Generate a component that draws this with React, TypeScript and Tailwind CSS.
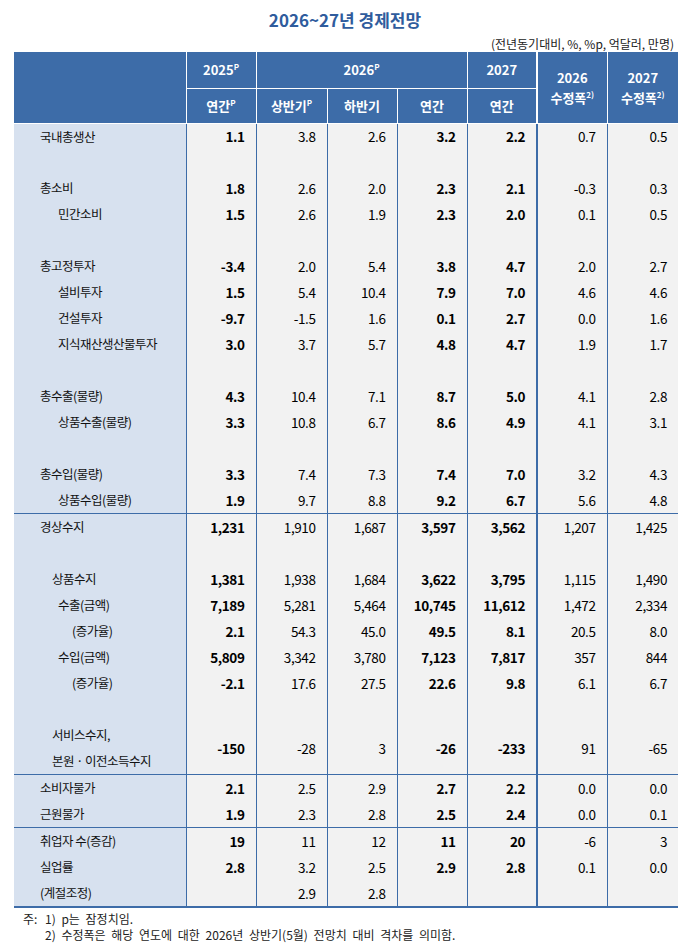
import React from 'react'

type Row = {
  label?: string[]
  indent?: number
  v?: string[]
  sep?: boolean
}

const rows: Row[] = [
  { label: ['국내총생산'], indent: 0, v: ['1.1', '3.8', '2.6', '3.2', '2.2', '0.7', '0.5'] },
  {},
  { label: ['총소비'], indent: 0, v: ['1.8', '2.6', '2.0', '2.3', '2.1', '-0.3', '0.3'] },
  { label: ['민간소비'], indent: 18, v: ['1.5', '2.6', '1.9', '2.3', '2.0', '0.1', '0.5'] },
  {},
  { label: ['총고정투자'], indent: 0, v: ['-3.4', '2.0', '5.4', '3.8', '4.7', '2.0', '2.7'] },
  { label: ['설비투자'], indent: 18, v: ['1.5', '5.4', '10.4', '7.9', '7.0', '4.6', '4.6'] },
  { label: ['건설투자'], indent: 18, v: ['-9.7', '-1.5', '1.6', '0.1', '2.7', '0.0', '1.6'] },
  { label: ['지식재산생산물투자'], indent: 18, v: ['3.0', '3.7', '5.7', '4.8', '4.7', '1.9', '1.7'] },
  {},
  { label: ['총수출(물량)'], indent: 0, v: ['4.3', '10.4', '7.1', '8.7', '5.0', '4.1', '2.8'] },
  { label: ['상품수출(물량)'], indent: 18, v: ['3.3', '10.8', '6.7', '8.6', '4.9', '4.1', '3.1'] },
  {},
  { label: ['총수입(물량)'], indent: 0, v: ['3.3', '7.4', '7.3', '7.4', '7.0', '3.2', '4.3'] },
  { label: ['상품수입(물량)'], indent: 18, v: ['1.9', '9.7', '8.8', '9.2', '6.7', '5.6', '4.8'] },
  { label: ['경상수지'], indent: 0, sep: true, v: ['1,231', '1,910', '1,687', '3,597', '3,562', '1,207', '1,425'] },
  {},
  { label: ['상품수지'], indent: 12, v: ['1,381', '1,938', '1,684', '3,622', '3,795', '1,115', '1,490'] },
  { label: ['수출(금액)'], indent: 18, v: ['7,189', '5,281', '5,464', '10,745', '11,612', '1,472', '2,334'] },
  { label: ['(증가율)'], indent: 32, v: ['2.1', '54.3', '45.0', '49.5', '8.1', '20.5', '8.0'] },
  { label: ['수입(금액)'], indent: 18, v: ['5,809', '3,342', '3,780', '7,123', '7,817', '357', '844'] },
  { label: ['(증가율)'], indent: 32, v: ['-2.1', '17.6', '27.5', '22.6', '9.8', '6.1', '6.7'] },
  {},
  { label: ['서비스수지,', '본원 · 이전소득수지'], indent: 12, v: ['-150', '-28', '3', '-26', '-233', '91', '-65'] },
  { label: ['소비자물가'], indent: 0, sep: true, v: ['2.1', '2.5', '2.9', '2.7', '2.2', '0.0', '0.0'] },
  { label: ['근원물가'], indent: 0, v: ['1.9', '2.3', '2.8', '2.5', '2.4', '0.0', '0.1'] },
  { label: ['취업자 수(증감)'], indent: 0, sep: true, v: ['19', '11', '12', '11', '20', '-6', '3'] },
  { label: ['실업률'], indent: 0, v: ['2.8', '3.2', '2.5', '2.9', '2.8', '0.1', '0.0'] },
  { label: ['(계절조정)'], indent: 0, v: ['', '2.9', '2.8', '', '', '', ''] },
]

const boldCols = [0, 3, 4]

function Sup({ children }: { children: React.ReactNode }) {
  return <span className="relative -top-[5px] text-[8px] font-bold leading-none">{children}</span>
}

export default function App() {
  return (
    <div className="w-[690px] bg-white px-[14px] pt-[8px] text-black font-['Noto_Sans_CJK_KR','Noto_Sans',sans-serif]">
      {/* title */}
      <div className="h-[24px] text-center text-[17px] font-bold leading-[24px] text-[#2f5c9d]">2026~27년 경제전망</div>
      <div className="mt-[4px] h-[16px] pr-[2px] text-right text-[12px] leading-[16px] text-[#222]">
        (전년동기대비, %, %p, 억달러, 만명)
      </div>

      {/* table */}
      <table className="w-[664px] table-fixed border-collapse">
        <colgroup>
          <col className="w-[172px]" />
          <col className="w-[70px]" />
          <col className="w-[71px]" />
          <col className="w-[70px]" />
          <col className="w-[70px]" />
          <col className="w-[70px]" />
          <col className="w-[70px]" />
          <col className="w-[71px]" />
        </colgroup>
        <thead className="bg-[#3d6ca8] text-[13px] font-bold text-white">
          <tr className="h-[36px]">
            <th rowSpan={2} className="border-b border-white"></th>
            <th className="border-b border-l border-white">
              2025<Sup>P</Sup>
            </th>
            <th colSpan={3} className="border-b border-l border-white">
              2026<Sup>P</Sup>
            </th>
            <th className="border-b border-l border-white">2027</th>
            <th rowSpan={2} className="border-b border-l-2 border-white pt-[2px] leading-[20px]">
              <div>2026</div>
              <div>
                수정폭<Sup>2)</Sup>
              </div>
            </th>
            <th rowSpan={2} className="border-b border-l border-white pt-[2px] leading-[20px]">
              <div>2027</div>
              <div>
                수정폭<Sup>2)</Sup>
              </div>
            </th>
          </tr>
          <tr className="h-[35px]">
            <th className="border-b border-l border-white">
              연간<Sup>P</Sup>
            </th>
            <th className="border-b border-l border-white">
              상반기<Sup>P</Sup>
            </th>
            <th className="border-b border-l border-white">하반기</th>
            <th className="border-b border-l border-white">연간</th>
            <th className="border-b border-l border-white">연간</th>
          </tr>
        </thead>
        <tbody className="text-[13.5px]">
          {rows.map((r, i) => {
            const tall = r.label && r.label.length > 1
            return (
              <tr
                key={i}
                className={`${tall ? 'h-[52px]' : 'h-[25.9px]'} ${r.sep ? 'border-t border-[#3d6ca8]' : ''} ${
                  i === rows.length - 1 ? 'border-b-2 border-[#3d6ca8]' : ''
                }`}
              >
                <td className="bg-[#d7e1ef] p-0 align-middle">
                  {r.label && (
                    <div
                      className="text-[12.5px] leading-[26px] tracking-[-0.04em] text-[#111]"
                      style={{ paddingLeft: 26 + (r.indent ?? 0) }}
                    >
                      {r.label.map((l) => (
                        <div key={l}>{l}</div>
                      ))}
                    </div>
                  )}
                </td>
                {Array.from({ length: 7 }).map((_, c) => (
                  <td
                    key={c}
                    className={`bg-[#f2f2f2] pr-[11px] text-right align-middle tracking-[-0.03em] ${
                      c === 5 ? 'border-l-2' : 'border-l'
                    } border-[#3d6ca8] ${boldCols.includes(c) ? 'font-bold' : ''}`}
                  >
                    {r.v ? r.v[c] : ''}
                  </td>
                ))}
              </tr>
            )
          })}
        </tbody>
      </table>

      {/* notes */}
      <div className="mt-[3px] flex pl-[9px] text-[12px] leading-[16px] text-[#222] [word-spacing:3px]">
        <span className="w-[22px] shrink-0">주:</span>
        <div>
          <div>1) p는 잠정치임.</div>
          <div>2) 수정폭은 해당 연도에 대한 2026년 상반기(5월) 전망치 대비 격차를 의미함.</div>
        </div>
      </div>
    </div>
  )
}
